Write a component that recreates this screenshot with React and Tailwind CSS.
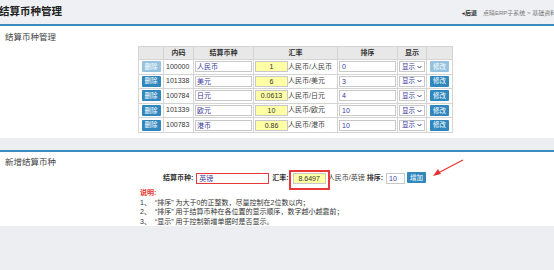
import React from 'react';

const rows = [
  { id: '100000', name: '人民币', rate: '1', unit: '人民币/人民币', sort: '0', first: true },
  { id: '101338', name: '美元', rate: '6', unit: '人民币/美元', sort: '3' },
  { id: '100784', name: '日元', rate: '0.0613', unit: '人民币/日元', sort: '4' },
  { id: '101339', name: '欧元', rate: '10', unit: '人民币/欧元', sort: '10' },
  { id: '100783', name: '港币', rate: '0.86', unit: '人民币/港币', sort: '10' },
];

const Btn = ({ children, light }) => (
  <span
    className={`inline-flex items-center justify-center h-[11px] px-[3px] text-[6.5px] text-white rounded-[1px] ${
      light ? 'bg-[#94c2df]' : 'bg-[#2f87bd]'
    }`}
  >
    {children}
  </span>
);

const SelectBox = () => (
  <span className="inline-flex items-center justify-between w-[26px] h-[11px] px-[2px] bg-white border border-[#c8c8c8] text-[6.5px] text-[#3b3b9c]">
    显示
    <svg width="5" height="4" viewBox="0 0 5 4">
      <path d="M0.5 1 L2.5 3 L4.5 1" fill="none" stroke="#3b3b9c" strokeWidth="1" />
    </svg>
  </span>
);

export default function App() {
  return (
    <div
      className="w-[554px] h-[270px] bg-[#eceef2] overflow-hidden text-[#333]"
      style={{ fontFamily: '"Liberation Sans", "Noto Sans CJK SC", sans-serif' }}
    >
      {/* Title bar */}
      <div className="h-[26px] flex items-center border-b-2 border-[#3a8cbf] bg-[#eef0f4] overflow-hidden">
        <div className="w-[463px] shrink-0 text-[10.5px] font-bold text-[#222] -ml-[1px]">结算币种管理</div>
        <div className="flex items-center gap-[6px] shrink-0 text-[6px] text-[#777] pt-[2px] whitespace-nowrap">
          <span className="text-[#333] font-bold">
            <span className="text-[5px]">◂</span>后退
          </span>
          <span>点晴ERP子系统 &gt; 基础资料 &gt; 结算币种管理</span>
        </div>
      </div>

      {/* List section */}
      <div className="bg-white h-[112px] pt-[5px]">
        <div className="pl-[5px] text-[8.5px] text-[#444] leading-[12px]">结算币种管理</div>
        <table className="ml-[138px] mt-[3px] table-fixed border-collapse text-[7px] w-[314px]">
          <colgroup>
            <col className="w-[25px]" />
            <col className="w-[30px]" />
            <col className="w-[60px]" />
            <col className="w-[84px]" />
            <col className="w-[60px]" />
            <col className="w-[29px]" />
            <col className="w-[26px]" />
          </colgroup>
          <thead>
            <tr className="h-[13px] bg-[#e8e8e8] font-bold text-[#333]">
              <th className="border border-[#d4d4d4]"></th>
              <th className="border border-[#d4d4d4]">内码</th>
              <th className="border border-[#d4d4d4]">结算币种</th>
              <th className="border border-[#d4d4d4]">汇率</th>
              <th className="border border-[#d4d4d4]">排序</th>
              <th className="border border-[#d4d4d4]">显示</th>
              <th className="border border-[#d4d4d4]"></th>
            </tr>
          </thead>
          <tbody>
            {rows.map((r) => (
              <tr key={r.id} className="h-[14.6px]">
                <td className="border border-[#d4d4d4] text-center">
                  <Btn light={r.first}>删除</Btn>
                </td>
                <td className="border border-[#d4d4d4] pl-[2px] text-[#333]">{r.id}</td>
                <td className="border border-[#d4d4d4] px-[1px]">
                  <div className="h-[11px] border border-[#c8c8c8] bg-white text-[#3b3b9c] pl-[1px] leading-[9px] w-[57px]">
                    {r.name}
                  </div>
                </td>
                <td className="border border-[#d4d4d4] pl-[1px]">
                  <div className="flex items-center">
                    <div className="h-[11px] w-[33px] border border-[#c8c8c8] bg-[#ffffa6] text-center leading-[9px]">
                      {r.rate}
                    </div>
                    <span className="text-[#444] whitespace-nowrap">{r.unit}</span>
                  </div>
                </td>
                <td className="border border-[#d4d4d4] px-[1px]">
                  <div className="h-[11px] border border-[#c8c8c8] bg-white text-[#3b3b9c] pl-[2px] leading-[9px]">
                    {r.sort}
                  </div>
                </td>
                <td className="border border-[#d4d4d4] text-center">
                  <SelectBox />
                </td>
                <td className="border border-[#d4d4d4] text-center">
                  <Btn light={r.first}>修改</Btn>
                </td>
              </tr>
            ))}
          </tbody>
        </table>
      </div>

      {/* Add section */}
      <div className="mt-[12px] border-t-2 border-[#3a8cbf] bg-white h-[76px] relative">
        <div className="pl-[5px] pt-[4px] text-[8.5px] text-[#444] leading-[12px]">新增结算币种</div>
        <div className="flex items-center mt-[4px] h-[12px] text-[7px]">
          <span className="ml-[163px] font-bold text-[#333]">结算币种:</span>
          <div className="ml-[3px] h-[11px] w-[73px] border border-[#e5393b] bg-white text-[#3b3b9c] pl-[2px] leading-[9px]">
            英镑
          </div>
          <span className="ml-[3px] font-bold text-[#333]">汇率:</span>
          <span className="relative ml-[4px]">
            <div className="h-[11px] w-[33px] border border-[#c8c8c8] bg-[#ffffa6] text-center leading-[9px]">8.6497</div>
            <span className="absolute left-[-4px] top-[-3px] w-[41px] h-[20px] border-2 border-[#e8383a]"></span>
          </span>
          <span className="ml-[2px] text-[#444]">人民币/英镑</span>
          <span className="ml-[2px] font-bold text-[#333]">排序:</span>
          <div className="ml-[3px] h-[11px] w-[19px] border border-[#c8c8c8] bg-white text-[#3b3b9c] pl-[2px] leading-[9px]">
            10
          </div>
          <span className="ml-[2px]">
            <Btn>增加</Btn>
          </span>
        </div>
        <div className="ml-[140px] mt-[4px] text-[7px] leading-[9.5px]">
          <div className="text-[#e5322d] font-bold">说明:</div>
          <div className="flex"><span className="w-[15px]">1、</span>“排序” 为大于0的正整数，尽量控制在2位数以内；</div>
          <div className="flex"><span className="w-[15px]">2、</span>“排序” 用于结算币种在各位置的显示顺序，数字越小越靠前；</div>
          <div className="flex"><span className="w-[15px]">3、</span>“显示” 用于控制新增单据时是否显示。</div>
        </div>
        <svg className="absolute left-[430px] top-[7px]" width="36" height="20" viewBox="0 0 36 20">
          <line x1="33" y1="1" x2="8" y2="14" stroke="#e8332f" strokeWidth="1.2" />
          <path d="M3 17 L8 10 L11 15 Z" fill="#e8332f" />
        </svg>
      </div>
    </div>
  );
}
